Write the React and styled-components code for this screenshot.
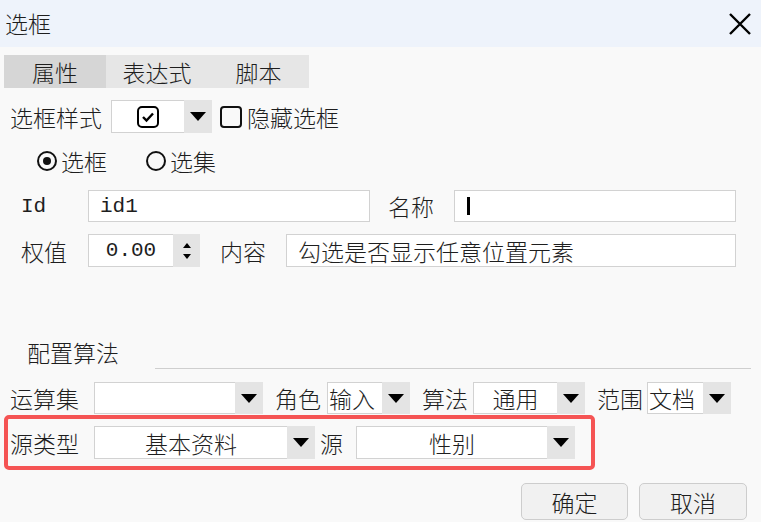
import React from 'react';
import styled, { createGlobalStyle } from 'styled-components';

const GlobalStyle = createGlobalStyle`
  html, body {
    margin: 0;
    padding: 0;
    background: #f9f9f9;
  }
  body {
    font-family: "Noto Sans CJK SC", "Noto Sans", sans-serif;
    font-weight: 300;
    color: #1e1e1e;
  }
`;

const Window = styled.div`
  width: 761px;
  height: 522px;
  overflow: hidden;
  background: #f9f9f9;
  font-size: 23px;
`;

const TitleBar = styled.div`
  height: 47px;
  background: #eef3fb;
  display: flex;
  align-items: center;
  justify-content: space-between;
  padding: 0 9px 0 5px;
  box-sizing: border-box;
`;

const Title = styled.span`
  font-size: 23px;
  line-height: 1;
`;

const Body = styled.div`
  padding: 8px 0 0 4px;
`;

const Tabs = styled.div`
  display: flex;
  height: 33px;
`;

const Tab = styled.div`
  width: ${p => p.w}px;
  display: flex;
  align-items: center;
  justify-content: center;
  background: ${p => (p.active ? '#d6d6d6' : '#e6e6e6')};
`;

const Row = styled.div`
  display: flex;
  align-items: center;
  height: ${p => p.h || 33}px;
  margin-top: ${p => p.mt || 0}px;
  padding-left: ${p => p.pl || 0}px;
`;

const Label = styled.span`
  width: ${p => (p.w ? `${p.w}px` : 'auto')};
  margin-left: ${p => p.ml || 0}px;
  flex-shrink: 0;
  white-space: nowrap;
  font-family: ${p => (p.mono ? '"Liberation Mono", monospace' : 'inherit')};
  font-size: ${p => (p.mono ? '21px' : '23px')};
  font-weight: ${p => (p.mono ? 400 : 300)};
`;

const SelectBox = styled.div`
  display: flex;
  width: ${p => p.w}px;
  height: ${p => p.h || 33}px;
  margin-left: ${p => p.ml || 0}px;
  flex-shrink: 0;
`;

const SelectValue = styled.div`
  flex: 1;
  min-width: 0;
  background: #fff;
  border: 1px solid #d2d2d2;
  border-right: none;
  display: flex;
  align-items: center;
  justify-content: ${p => (p.left ? 'flex-start' : 'center')};
  padding-left: ${p => (p.left ? 1 : 0)}px;
  overflow: hidden;
  white-space: nowrap;
`;

const SelectArrow = styled.div`
  width: 28px;
  background: #e4e4e4;
  display: flex;
  align-items: center;
  justify-content: center;
`;

const Checkbox = styled.span`
  width: 18px;
  height: 18px;
  border: 2px solid #111;
  border-radius: 4px;
  margin: 0 5px 0 8px;
  flex-shrink: 0;
`;

const Radio = styled.span`
  width: 16px;
  height: 16px;
  border: 2px solid #111;
  border-radius: 50%;
  display: flex;
  align-items: center;
  justify-content: center;
  margin: 0 4px 0 ${p => p.ml || 0}px;
  flex-shrink: 0;
  &::after {
    content: '';
    display: ${p => (p.checked ? 'block' : 'none')};
    width: 8px;
    height: 8px;
    border-radius: 50%;
    background: #111;
  }
`;

const Input = styled.div`
  width: ${p => p.w}px;
  height: ${p => p.h || 32}px;
  margin-left: ${p => p.ml || 0}px;
  box-sizing: border-box;
  background: #fff;
  border: 1px solid #d2d2d2;
  display: flex;
  align-items: center;
  padding-left: 11px;
  flex-shrink: 0;
  white-space: nowrap;
  font-family: ${p => (p.mono ? '"Liberation Mono", monospace' : 'inherit')};
  font-size: ${p => (p.mono ? '21px' : '23px')};
  font-weight: ${p => (p.mono ? 400 : 300)};
`;

const Caret = styled.span`
  width: 3px;
  height: 18px;
  background: #000;
  margin-left: 1px;
`;

const Spinner = styled.div`
  display: flex;
  width: 112px;
  height: 33px;
  margin-left: ${p => p.ml || 0}px;
  flex-shrink: 0;
`;

const SpinValue = styled.div`
  flex: 1;
  background: #fff;
  border: 1px solid #d2d2d2;
  border-right: none;
  display: flex;
  align-items: center;
  justify-content: center;
  font-family: "Liberation Mono", monospace;
  font-size: 21px;
  font-weight: 400;
`;

const SpinButtons = styled.div`
  width: 27px;
  background: #e4e4e4;
  display: flex;
  flex-direction: column;
  align-items: center;
  justify-content: center;
  gap: 6px;
`;

const SectionHead = styled.div`
  display: flex;
  align-items: flex-end;
  margin-top: 74px;
  padding-left: 23px;
  height: 28px;
`;

const SectionLine = styled.div`
  flex: 1;
  height: 1px;
  background: #cfcfcf;
  margin: 0 10px 0 36px;
`;

const Highlight = styled.div`
  width: 591px;
  height: 55px;
  box-sizing: border-box;
  border: 4px solid #f55454;
  border-radius: 5px;
  display: flex;
  align-items: center;
  padding-left: 2px;
  margin-top: 1px;
`;

const Footer = styled.div`
  display: flex;
  justify-content: flex-end;
  gap: 11px;
  margin-top: 13px;
  padding-right: 14px;
`;

const Button = styled.div`
  width: ${p => p.w}px;
  height: 37px;
  box-sizing: border-box;
  border: 1px solid #cdcdcd;
  border-radius: 5px;
  background: #f1f1f1;
  display: flex;
  align-items: center;
  justify-content: center;
`;

const Triangle = () => (
  <svg width="16" height="9" viewBox="0 0 16 9">
    <polygon points="0,0 16,0 8,9" fill="#000" />
  </svg>
);

const Select = ({ w, children, left, ml, h }) => (
  <SelectBox w={w} ml={ml} h={h}>
    <SelectValue left={left}>{children}</SelectValue>
    <SelectArrow>
      <Triangle />
    </SelectArrow>
  </SelectBox>
);

const CheckIcon = () => (
  <svg width="22" height="22" viewBox="0 0 22 22">
    <rect x="1" y="1" width="20" height="20" rx="4" fill="none" stroke="#000" strokeWidth="2" />
    <polyline points="6,11 9.5,14.5 16,7.5" fill="none" stroke="#000" strokeWidth="2.4" />
  </svg>
);

const CloseIcon = () => (
  <svg width="24" height="24" viewBox="0 0 24 24">
    <path d="M2 2 L22 22 M22 2 L2 22" stroke="#000" strokeWidth="2.4" />
  </svg>
);

export default function App() {
  return (
    <>
      <GlobalStyle />
      <Window>
        <TitleBar>
          <Title>选框</Title>
          <CloseIcon />
        </TitleBar>
        <Body>
          <Tabs>
            <Tab w={102} active>属性</Tab>
            <Tab w={102}>表达式</Tab>
            <Tab w={101}>脚本</Tab>
          </Tabs>

          <Row mt={12} pl={6}>
            <Label w={101}>选框样式</Label>
            <Select w={101}>
              <CheckIcon />
            </Select>
            <Checkbox />
            <Label>隐藏选框</Label>
          </Row>

          <Row h={28} mt={14}>
            <Radio ml={33} checked />
            <Label>选框</Label>
            <Radio ml={39} />
            <Label>选集</Label>
          </Row>

          <Row h={32} mt={15} pl={17}>
            <Label w={67} mono>Id</Label>
            <Input w={282} mono>id1</Input>
            <Label ml={18} w={66}>名称</Label>
            <Input w={282}>
              <Caret />
            </Input>
          </Row>

          <Row mt={12} pl={17}>
            <Label w={67}>权值</Label>
            <Spinner>
              <SpinValue>0.00</SpinValue>
              <SpinButtons>
                <svg width="8" height="5" viewBox="0 0 8 5"><polygon points="0,5 8,5 4,0" fill="#000" /></svg>
                <svg width="8" height="5" viewBox="0 0 8 5"><polygon points="0,0 8,0 4,5" fill="#000" /></svg>
              </SpinButtons>
            </Spinner>
            <Label ml={20} w={66}>内容</Label>
            <Input w={450} h={33}>勾选是否显示任意位置元素</Input>
          </Row>

          <SectionHead>
            <Label>配置算法</Label>
            <SectionLine />
          </SectionHead>

          <Row h={32} mt={13} pl={6}>
            <Label w={84}>运算集</Label>
            <Select w={169} h={32} />
            <Label ml={12} w={52}>角色</Label>
            <Select w={83} h={32} left>输入</Select>
            <Label ml={12} w={51}>算法</Label>
            <Select w={112} h={32}>通用</Select>
            <Label ml={12} w={50}>范围</Label>
            <Select w={84} h={32} left>文档</Select>
          </Row>

          <Highlight>
            <Label w={84}>源类型</Label>
            <Select w={221}>基本资料</Select>
            <Label ml={5} w={36}>源</Label>
            <Select w={219}>性别</Select>
          </Highlight>

          <Footer>
            <Button w={107}>确定</Button>
            <Button w={108}>取消</Button>
          </Footer>
        </Body>
      </Window>
    </>
  );
}
